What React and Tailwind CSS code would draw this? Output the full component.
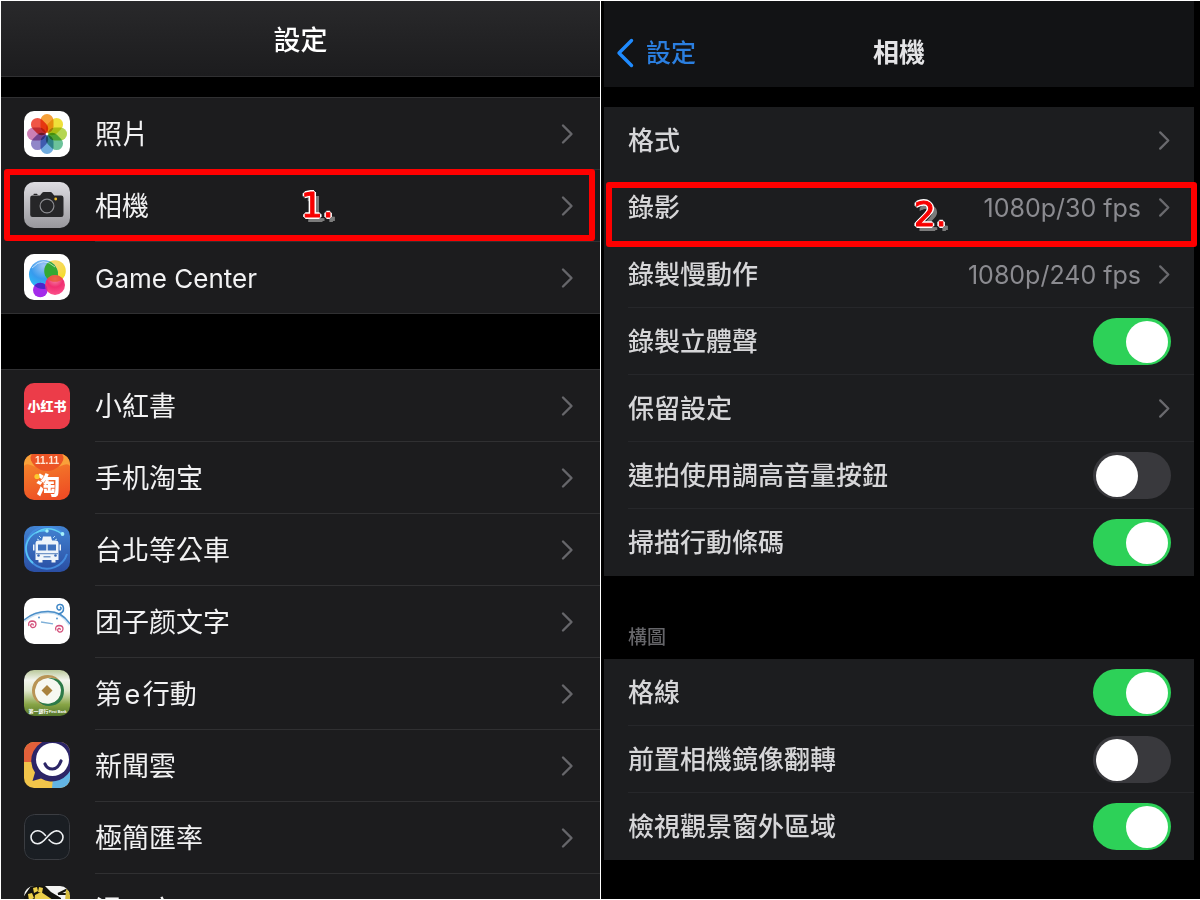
import React, { useId } from "react";

const cjk = "font-['Inter','Noto_Sans_CJK_TC',sans-serif]";

function IconFrame({ children, stroke }) {
  return (
    <svg viewBox="0 0 46 46" className="block size-[46px] rounded-[10px]" aria-hidden="true">
      {children}
      {stroke && <rect x="0.5" y="0.5" width="45" height="45" rx="10" fill="none" stroke={stroke} />}
    </svg>
  );
}

function PhotosIcon() {
  const petals = ["#f6a13a", "#efe03a", "#b5d652", "#6cc29a", "#6fabdf", "#9187c8", "#cc7fb5", "#ef5546"];
  return (
    <IconFrame>
      <rect width="46" height="46" fill="#fff" />
      {petals.map((c, i) => (
        <rect
          key={c}
          x="16.5"
          y="3"
          width="13"
          height="19"
          rx="6.5"
          fill={c}
          transform={`rotate(${i * 45} 23 23)`}
          style={{ mixBlendMode: "multiply" }}
        />
      ))}
      <circle cx="23" cy="23" r="1.2" fill="#fff" />
    </IconFrame>
  );
}

function CameraIcon() {
  return (
    <IconFrame>
      <defs>
        <linearGradient id="cam" x1="0" y1="0" x2="0" y2="1">
          <stop offset="0" stopColor="#dedde2" />
          <stop offset="1" stopColor="#98979c" />
        </linearGradient>
      </defs>
      <rect width="46" height="46" fill="url(#cam)" />
      <path
        d="M8.5 13.6h7.500l2-2.600q.7-.9 1.800-.9h6.600q1.100 0 1.800.9l2 2.600h7q2.300 0 2.300 2.200v16.900q0 2.200-2.300 2.200h-28.700q-2.300 0-2.300-2.200V15.800q0-2.200 2.300-2.200z"
        fill="#262628"
      />
      <rect x="9.500" y="11.700" width="4" height="1.300" rx=".6" fill="#262628" />
      <circle cx="23" cy="24" r="6.900" fill="none" stroke="#8c8c90" strokeWidth="1.200" />
      <circle cx="31.700" cy="17" r="1.400" fill="#f0bd2b" />
    </IconFrame>
  );
}

function GameCenterIcon() {
  return (
    <IconFrame>
      <defs>
        <radialGradient id="gcBlue" cx=".5" cy=".2" r=".9">
          <stop offset="0" stopColor="#9ec4f5" />
          <stop offset=".5" stopColor="#379bee" />
          <stop offset="1" stopColor="#27c8fa" />
        </radialGradient>
        <radialGradient id="gcYellow" cx=".5" cy=".2" r=".9">
          <stop offset="0" stopColor="#f7d774" />
          <stop offset="1" stopColor="#f4de16" />
        </radialGradient>
        <radialGradient id="gcPink" cx=".5" cy=".2" r=".9">
          <stop offset="0" stopColor="#f58aa8" />
          <stop offset=".45" stopColor="#f02f72" />
          <stop offset="1" stopColor="#ff5890" />
        </radialGradient>
        <clipPath id="gcClip">
          <circle cx="19.500" cy="20.500" r="14.500" />
        </clipPath>
        <clipPath id="gcPinkClip">
          <circle cx="31" cy="31" r="10" />
        </clipPath>
      </defs>
      <rect width="46" height="46" fill="#fff" />
      <circle cx="31" cy="17" r="10.800" fill="url(#gcYellow)" />
      <circle cx="19.500" cy="20.500" r="14.500" fill="url(#gcBlue)" />
      <g clipPath="url(#gcClip)">
        <circle cx="31" cy="17" r="10.800" fill="#35a832" />
      </g>
      <circle cx="16.300" cy="36" r="7.300" fill="#a42bea" />
      <g clipPath="url(#gcClip)">
        <circle cx="16.300" cy="36" r="7.300" fill="#4b26c9" />
      </g>
      <circle cx="31" cy="31" r="10" fill="url(#gcPink)" />
      <g clipPath="url(#gcPinkClip)">
        <circle cx="31" cy="17" r="10.800" fill="#e8552c" opacity=".75" />
        <circle cx="16.300" cy="36" r="7.300" fill="#b51f9a" opacity=".6" />
      </g>
      <path d="M8 14Q19 2 31 13" fill="none" stroke="#fff" strokeWidth="1" opacity=".6" />
    </IconFrame>
  );
}

function XiaohongshuIcon() {
  return (
    <IconFrame>
      <rect width="46" height="46" fill="#ec3c49" />
      <text x="23" y="28" textAnchor="middle" fontSize="13" fontWeight="900" fill="#fff" fontFamily="Noto Sans CJK SC, sans-serif">
        小红书
      </text>
    </IconFrame>
  );
}

function TaobaoIcon() {
  return (
    <IconFrame>
      <defs>
        <linearGradient id="tb" x1=".3" y1="0" x2=".6" y2="1">
          <stop offset="0" stopColor="#f58a2c" />
          <stop offset="1" stopColor="#ee4d24" />
        </linearGradient>
      </defs>
      <rect width="46" height="46" fill="url(#tb)" />
      <path d="M4 0Q10 17 23 17T42 0z" fill="#ec5526" />
      <path d="M0 0h8Q4 5 11 13 2 8 0 12zM46 0h-8q4 5-3 13 9-5 11-1z" fill="#f9a13a" />
      <text x="23" y="10" textAnchor="middle" fontSize="10" fontWeight="700" fill="#ffe9d8" fontFamily="Liberation Sans, sans-serif">
        11.11
      </text>
      <text x="24" y="40" textAnchor="middle" fontSize="24" fontWeight="900" fill="#fff" fontFamily="Noto Sans CJK SC, sans-serif">
        淘
      </text>
      <circle cx="13" cy="22.500" r="2.600" fill="#fcc92e" />
    </IconFrame>
  );
}

function BusIcon() {
  return (
    <IconFrame>
      <defs>
        <linearGradient id="bus" x1="0" y1="0" x2="0" y2="1">
          <stop offset="0" stopColor="#4283d2" />
          <stop offset="1" stopColor="#2a4ea3" />
        </linearGradient>
      </defs>
      <rect width="46" height="46" fill="url(#bus)" />
      <path d="M39 8A21 21 0 1 0 43 28" fill="none" stroke="#438bde" strokeWidth="2" />
      <path d="M23 5A18 18 0 0 0 9 37" fill="none" stroke="#58c5f5" strokeWidth="1.600" />
      <path d="M12 7Q24-2 38 8" fill="none" stroke="#63d1f4" strokeWidth="1.500" />
      <circle cx="23" cy="5" r="1.700" fill="#a5f1fb" />
      <circle cx="38.500" cy="8" r="1.900" fill="#a5f1fb" />
      <g fill="#eef4fa">
        <path d="M19 10.500h8l1 4h3.500q3 0 3 3V34h-3v2.500h-4V34h-9v2.500h-4V34h-3V17.500q0-3 3-3H18z" />
        <path d="M9 18.500h1.500v6H9zM35.500 18.500H37v6h-1.500z" />
      </g>
      <path d="M14 18.500h8.300v6H14zM23.700 18.500H32v6h-8.300z" fill="#3d70bd" />
      <path d="M12 27h22v1.200H12zM19.500 30h7v1.500h-7z" fill="#7397c9" />
      <circle cx="14.500" cy="29.500" r="1.300" fill="#3868b6" />
      <circle cx="31.500" cy="29.500" r="1.300" fill="#3868b6" />
      <path d="M13 13l2 1M15 10l2 2M33 13l-2 1M31 10l-2 2" stroke="#b5dbf5" strokeWidth="1" />
    </IconFrame>
  );
}

function KaomojiIcon() {
  return (
    <IconFrame>
      <rect width="46" height="46" fill="#fff" />
      <path d="M0 23Q10 14 24 14T46 27" fill="none" stroke="#cfe3f3" strokeWidth="3" />
      <path d="M0 22Q10 13.500 24 13.500T46 26" fill="none" stroke="#4c8fc9" strokeWidth="1.300" />
      <path d="M34 16Q40 15 39.500 10 39 6 35.500 6.500 32.500 7 33 10 34 13 36.500 11.500 38 10 36 9" fill="none" stroke="#3f87c6" strokeWidth="1.500" />
      <path d="M17 24l12 1.800" stroke="#7fb0d8" strokeWidth="1.300" />
      <circle cx="15" cy="19.500" r=".9" fill="#4d8fc8" />
      <circle cx="33" cy="20.500" r=".9" fill="#4d8fc8" />
      <g fill="none" stroke="#d3517b" strokeWidth="1.300">
        <path d="M5 28Q3.500 23.500 8 23 12 23 12 26.500 11.500 30 8 29.500 5.500 28 7.500 26 10 25.500 9 27.500" />
        <path d="M32 32.500Q30.500 28 35 27.500 39 27.500 39 31 38.500 34.500 35 34 32.500 32.500 34.500 30.500 37 30 36 32" />
      </g>
    </IconFrame>
  );
}

function FirstBankIcon() {
  return (
    <IconFrame>
      <defs>
        <linearGradient id="fb" x1="0" y1="0" x2="0" y2="1">
          <stop offset="0" stopColor="#b9c79a" />
          <stop offset=".22" stopColor="#f3f5ee" />
          <stop offset=".45" stopColor="#dfe7cc" />
          <stop offset=".75" stopColor="#87a445" />
          <stop offset="1" stopColor="#55762b" />
        </linearGradient>
      </defs>
      <rect width="46" height="46" fill="url(#fb)" />
      <circle cx="23" cy="20.500" r="14" fill="#f7f8f1" />
      <path d="M24 5A15.500 15.500 0 0 0 23 36Q10.500 31 11 20 13 9 24 8 32 7 37 13 33 5 24 5z" fill="#b89455" />
      <path d="M24 8Q39 7 40 20 40 35 25 36 18 36 14 31 20 34.500 26 33.500 37 31 37 20 36 10 24 8z" fill="#2c7a48" />
      <path d="M23 15l5.500 5.500L23 26l-5.500-5.500z" fill="#a9823e" />
      <text x="4.500" y="43" fontSize="5" fontWeight="700" fill="#fff" fontFamily="Noto Sans CJK TC, sans-serif">
        第一銀行
      </text>
      <text x="25" y="42.500" fontSize="3.600" fontWeight="700" fill="#fff" fontFamily="Liberation Sans, sans-serif">
        First Bank
      </text>
    </IconFrame>
  );
}

function NewsIcon() {
  return (
    <IconFrame>
      <rect width="46" height="46" fill="#f1c44a" />
      <path d="M0 0h22L9 20 0 20z" fill="#e2603a" />
      <path d="M22 0h24v20H22z" fill="#332a6b" />
      <path d="M29 36Q40 36 46 27v19H28z" fill="#62b4e4" />
      <path d="M28-2.500a21 21 0 1 1-11 39L8.500 39 11 30.500A21 21 0 0 1 28-2.500z" fill="#2c2567" />
      <circle cx="28.500" cy="17.500" r="16.500" fill="#fff" />
      <path d="M21 22Q23 27 28.500 27T37 19" fill="none" stroke="#2c2567" strokeWidth="3.200" strokeLinecap="round" />
    </IconFrame>
  );
}

function InfinityIcon() {
  return (
    <IconFrame stroke="#3b3d42">
      <rect width="46" height="46" fill="#1a1e23" />
      <path
        d="M21.500 21.500Q17.500 16.800 13.500 16.800A6.500 6.500 0 0 0 13.500 29.800Q17.500 29.800 22.500 23.800T32.500 16.800A6.500 6.500 0 0 1 32.500 29.800Q28.500 29.800 25 25.800"
        fill="none"
        stroke="#eef0f2"
        strokeWidth="1.600"
        strokeLinecap="round"
      />
    </IconFrame>
  );
}

function ComicIcon() {
  return (
    <IconFrame>
      <rect width="46" height="46" fill="#f4f4f2" />
      <path d="M7 0h14l6 6 10 6v34H0V10z" fill="#15140f" />
      <path d="M9 2l4-1 1 4-4 2zM15 1l4 1-1 5-4-1zM4 8l4-1 2 5-5 3zM11 9l6-3 12 8-5 20H8z" fill="#ebcf4a" />
      <path d="M34 8l10-5M34 8l12 0" stroke="#15140f" strokeWidth="2" />
      <path d="M42 3l4 3v20l-5-10z" fill="#d8bd3e" />
    </IconFrame>
  );
}

function Chevron({ className }) {
  return (
    <svg viewBox="0 0 14 22" className={className} fill="none" stroke="currentColor" strokeWidth="2.400" strokeLinecap="round" strokeLinejoin="round" aria-hidden="true">
      <path d="M3 2.500 11.500 11 3 19.500" />
    </svg>
  );
}

function Callout({ label, box, place }) {
  return (
    <span className={`pointer-events-none absolute z-10 rounded-[3px] border-6 border-[#fe0000] ${box}`}>
      <span
        className={`absolute font-['DejaVu_Sans'] text-[34px] leading-9 text-[#f80000] [-webkit-text-stroke:1px_#f80000] [text-shadow:2px_0_0_white,-2px_0_0_white,0_2px_0_white,0_-2px_0_white,1px_1px_0_white,-1px_1px_0_white,1px_-1px_0_white,-1px_-1px_0_white,4px_4px_0_#7b7b7b,3px_5px_0_#7b7b7b,5px_4px_0_#7b7b7b] ${place}`}
      >
        {label}
      </span>
    </span>
  );
}

function AppRow({ Icon, name, size = "text-[27px]", first, marked }) {
  return (
    <li className="relative">
      <a href="#" className={`flex h-18 items-center border-[#303032] pl-[23px] text-[#f2f2f3] ${first ? "border-t" : ""}`}>
        <Icon />
        <span
          className={`ml-[25px] flex min-w-0 flex-1 items-center justify-between self-stretch border-[#303032] pr-[26px] ${
            first ? "" : "border-t"
          }`}
        >
          <span className={`pt-[3px] leading-9 font-normal whitespace-nowrap ${size}`}>{name}</span>
          <Chevron className="h-[22px] w-[14px] text-[#66666a]" />
        </span>
      </a>
      {marked && <Callout label="1." box="top-0 right-[5px] left-[3px] h-[72px]" place="top-3 left-[291px]" />}
    </li>
  );
}

function AppGroup({ rows }) {
  return (
    <ul className="border-b border-[#303032] bg-[#1c1c1e]">
      {rows.map((row, i) => (
        <AppRow key={row.name} {...row} first={i === 0} />
      ))}
    </ul>
  );
}

function Toggle({ id, on }) {
  return (
    <span className="relative inline-flex h-[47px] w-[78px] shrink-0">
      <input
        id={id}
        type="checkbox"
        role="switch"
        defaultChecked={on}
        className="peer size-full cursor-pointer appearance-none rounded-full bg-[#39393d] checked:bg-[#2dd158]"
      />
      <span className="pointer-events-none absolute top-[3px] left-[3px] size-[42px] rounded-full bg-white peer-checked:left-[33px]" />
    </span>
  );
}

function OptionRow({ name, value, on, last, marked }) {
  const id = useId();
  const isToggle = on !== undefined;
  const line = last ? "border-transparent" : "border-[#26272a]";
  const label = "pt-0.5 text-[26px] leading-9 font-medium whitespace-nowrap text-[#d6d6d8]";
  return (
    <li className="relative pl-6">
      {isToggle ? (
        <div className={`flex h-[67px] items-center justify-between border-b pr-[23px] ${line}`}>
          <label htmlFor={id} className={label}>
            {name}
          </label>
          <Toggle id={id} on={on} />
        </div>
      ) : (
        <a href="#" className={`flex h-[67px] items-center justify-between border-b pr-[23px] ${line}`}>
          <span className={label}>{name}</span>
          <span className="flex items-center gap-4 text-[#8b8b90]">
            {value && <span className="pt-0.5 text-[25px] leading-9">{value}</span>}
            <Chevron className="h-[21px] w-[14px] text-[#6a6a6e]" />
          </span>
        </a>
      )}
      {marked && <Callout label="2." box="top-2 -right-[3px] left-[2px] h-[65px]" place="top-2 left-[302px]" />}
    </li>
  );
}

function OptionGroup({ rows }) {
  return (
    <ul className="bg-[#1c1d1f]">
      {rows.map((row, i) => (
        <OptionRow key={row.name} {...row} last={row.plain || i === rows.length - 1} />
      ))}
    </ul>
  );
}

const builtIn = [
  { Icon: PhotosIcon, name: "照片" },
  { Icon: CameraIcon, name: "相機", marked: true },
  { Icon: GameCenterIcon, name: "Game Center", size: "text-[26px]" },
];

const installed = [
  { Icon: XiaohongshuIcon, name: "小紅書" },
  { Icon: TaobaoIcon, name: "手机淘宝" },
  { Icon: BusIcon, name: "台北等公車" },
  { Icon: KaomojiIcon, name: "团子颜文字" },
  { Icon: FirstBankIcon, name: "第\u200ae\u200a行動" },
  { Icon: NewsIcon, name: "新聞雲" },
  { Icon: InfinityIcon, name: "極簡匯率" },
  { Icon: ComicIcon, name: "漫画文" },
];

const recording = [
  { name: "格式", plain: true },
  { name: "錄影", value: "1080p/30 fps", marked: true, plain: true },
  { name: "錄製慢動作", value: "1080p/240 fps" },
  { name: "錄製立體聲", on: true },
  { name: "保留設定" },
  { name: "連拍使用調高音量按鈕", on: false },
  { name: "掃描行動條碼", on: true },
];

const composition = [
  { name: "格線", on: true },
  { name: "前置相機鏡像翻轉", on: false },
  { name: "檢視觀景窗外區域", on: true },
];

export default function App() {
  return (
    <main className={`grid h-screen grid-cols-2 overflow-hidden border-y border-white bg-black ${cjk}`}>
      <section className="min-w-0 overflow-hidden border-l border-white">
        <header className="flex h-19 items-center justify-center border-b border-[#303032] bg-linear-to-b from-[#29292b] to-[#1c1c1e] pt-1">
          <h1 className="text-[27px] leading-9 font-medium text-white">設定</h1>
        </header>
        <div className="h-5" />
        <AppGroup rows={builtIn} />
        <div className="h-[55px]" />
        <AppGroup rows={installed} />
      </section>

      <section className="min-w-0 overflow-hidden border-l border-white pr-[6px] pl-[3px]">
        <header className="grid h-[86px] grid-cols-[1fr_auto_1fr] items-center bg-[#121315] px-3 pt-[18px]">
          <a href="#" className="flex items-center gap-3 text-[#2b7fe0]">
            <svg viewBox="0 0 18 30" className="h-[30px] w-[18px]" fill="none" stroke="#1f8bff" strokeWidth="3.400" strokeLinecap="round" strokeLinejoin="round" aria-hidden="true">
              <path d="M15.500 2.500 3 15l12.500 12.500" />
            </svg>
            <span className="text-[25px] leading-9 font-medium">設定</span>
          </a>
          <h2 className="text-[26px] leading-9 font-bold text-[#e4e4e6]">相機</h2>
        </header>
        <div className="h-5" />
        <OptionGroup rows={recording} />
        <div className="flex h-[83px] items-end pb-[3px] pl-6">
          <h3 className="text-[19px] leading-9 font-medium text-[#66666a]">構圖</h3>
        </div>
        <OptionGroup rows={composition} />
      </section>
    </main>
  );
}
